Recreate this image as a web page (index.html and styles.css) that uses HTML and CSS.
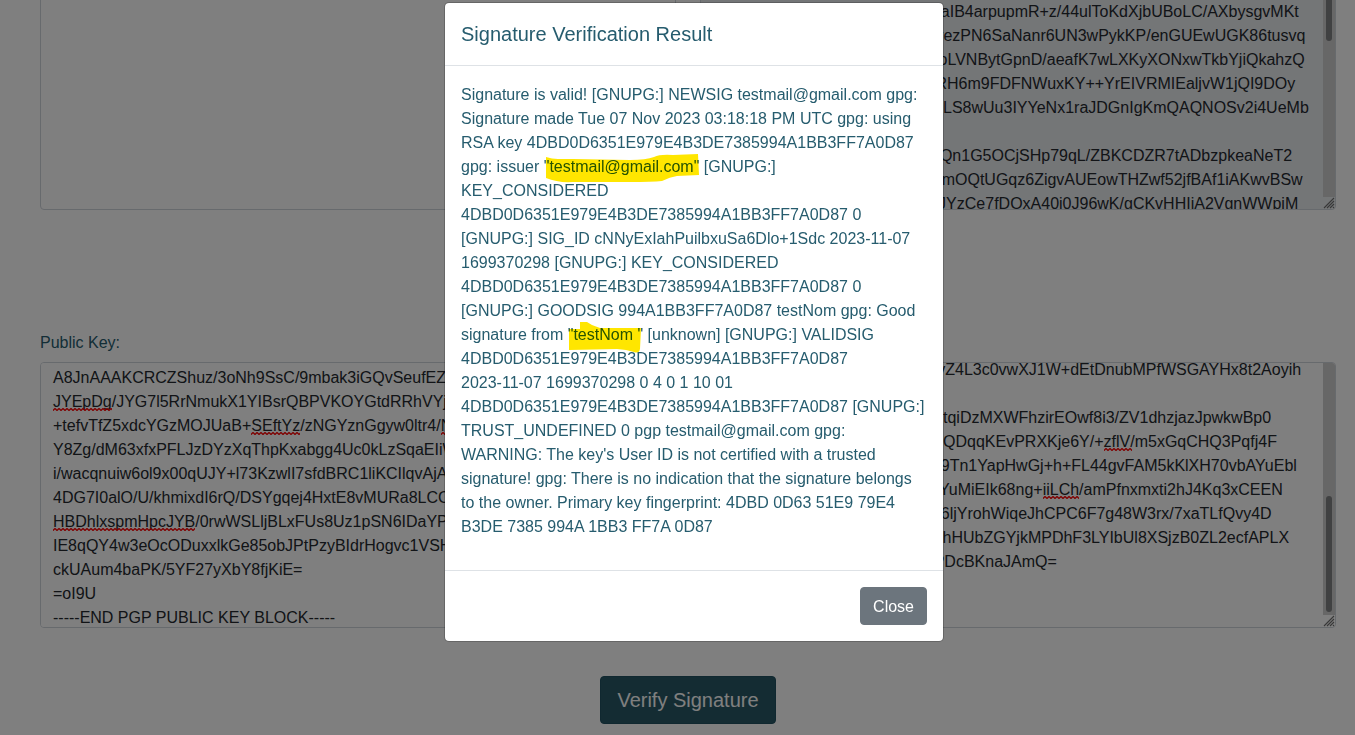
FILE: index.html
```html
<!DOCTYPE html>
<html lang="en">
<head>
<meta charset="utf-8">
<meta name="viewport" content="width=device-width, initial-scale=1">
<title>Verify Signature</title>
<link rel="stylesheet" href="styles.css">
</head>
<body>
<svg class="defs" aria-hidden="true">
  <defs>
    <pattern id="wave" width="4" height="3" patternUnits="userSpaceOnUse">
      <path d="M-1 1.5 L0 2.5 L2 .5 L4 2.5 L5 1.5" fill="none" stroke="#ff0000" stroke-width="1.3"/>
    </pattern>
    <symbol id="grip" viewBox="0 0 12 12">
      <path d="M1 11 11 1M4 11 11 4M7 11 11 7M10 11 11 10" fill="none" stroke="#707070" stroke-width="1.1"/>
    </symbol>
  </defs>
</svg>
<main class="page">
  <div class="fields fields-top">
    <div class="field"><textarea class="control" aria-label="Message" spellcheck="false"></textarea></div>
    <div class="field">
      <div class="editor">
        <textarea class="control" aria-label="Signed message" spellcheck="false" readonly>-----BEGIN PGP SIGNATURE-----

qb7gd2hn0ep5ua9o3d8ue6h2SiaIB4arpupmR+z/44ulToKdXjbUBoLC/AXbysgvMKt
qb7gd2hn0ep5ua9o3d8ub4nGsrezPN6SaNanr6UN3wPykKP/enGUEwUGK86tusvq
qb7gd2hn0ep5ua9o3d8ud4uw+oLVNBytGpnD/aeafK7wLXKyXONxwTkbYjiQkahzQ
qb7gd2hn0ep5ua9o3d8ue5h2aRH6m9FDFNWuxKY++YrEIVRMIEaljvW1jQI9DOy
qb7gd2hn0ep5ua9o3d8ug+ks3bLS8wUu3IYYeNx1raJDGnIgKmQAQNOSv2i4UeMb
=qb7g
qb7gd2hn0ep5ua9o3d8ue5h2atQn1G5OCjSHp79qL/ZBKCDZR7tADbzpkeaNeT2
qb7gd2hn0ep5ua9o3d8ud4upwimOQtUGqz6ZigvAUEowTHZwf52jfBAf1iAKwvBSw
qb7gd2hn0ep5ua9o3d8ub4nhwJYzCe7fDOxA40i0J96wK/gCKvHHIiA2VgnWWpiM


















</textarea>
        <div class="scrollbar" aria-hidden="true"><i class="thumb thumb-top"></i></div>
        <svg class="grip" aria-hidden="true"><use href="#grip"/></svg>
      </div>
    </div>
  </div>

  <div class="fields fields-keys">
    <div class="field">
      <label for="public-key">Public Key:</label>
      <div class="editor">
        <textarea class="control" id="public-key" spellcheck="false" data-scroll="268">-----BEGIN PGP PUBLIC KEY BLOCK-----










A8JnAAAKCRCZShuz/3oNh9SsC/9mbak3iGQvSeufEZb2
JYEpDg/JYG7l5RrNmukX1YIBsrQBPVKOYGtdRRhVYja7
+tefvTfZ5xdcYGzMOJUaB+SEftYz/zNGYznGgyw0ltr4/Nh
Y8Zg/dM63xfxPFLJzDYzXqThpKxabgg4Uc0kLzSqaEIiWq
i/wacqnuiw6ol9x00qUJY+l73KzwlI7sfdBRC1liKCIlqvAjAb
4DG7I0alO/U/khmixdI6rQ/DSYgqej4HxtE8vMURa8LCCd
HBDhlxspmHpcJYB/0rwWSLljBLxFUs8Uz1pSN6IDaYPe
IE8qQY4w3eOcODuxxlkGe85obJPtPzyBIdrHogvc1VSHa
ckUAum4baPK/5YF27yXbY8fjKiE=
=oI9U
-----END PGP PUBLIC KEY BLOCK-----</textarea>
        <svg class="typo typo-a" aria-hidden="true"><rect width="100%" height="3" fill="url(#wave)"/></svg>
        <svg class="typo typo-b" aria-hidden="true"><rect width="100%" height="3" fill="url(#wave)"/></svg>
        <svg class="typo typo-c" aria-hidden="true"><rect width="100%" height="3" fill="url(#wave)"/></svg>
        <svg class="typo typo-d" aria-hidden="true"><rect width="100%" height="3" fill="url(#wave)"/></svg>
      </div>
    </div>
    <div class="field">
      <div class="editor">
        <textarea class="control" aria-label="Signature" spellcheck="false" data-scroll="276">-----BEGIN PGP SIGNATURE-----










qb7gd2hn0ep5ua9o3d8ub4nhSvZ4L3c0vwXJ1W+dEtDnubMPfWSGAYHx8t2Aoyih
=d2hn
qb7gd2hn0ep5ua9o3d8ub4nks+tqiDzMXWFhzirEOwf8i3/ZV1dhzjazJpwkwBp0
qb7gd2hn0ep5ua9o3d8ue2hks+QDqqKEvPRXKje6Y/+zflV/m5xGqCHQ3Pqfj4F
qb7gd2hn0ep5ua9o3d8ue6h2Si9Tn1YapHwGj+h+FL44gvFAM5kKlXH70vbAYuEbl
qb7gd2hn0ep5ua9o3d8ud5u7ktYuMiEIk68ng+iiLCh/amPfnxmxti2hJ4Kq3xCEEN
qb7gd2hn0ep5ua9o3d8ug6b2Si6ljYrohWiqeJhCPC6F7g48W3rx/7xaTLfQvy4D
qb7gd2hn0ep5ua9o3d8ud5u7kshHUbZGYjkMPDhF3LYIbUl8XSjzB0ZL2ecfAPLX
qb7gd2hn0ep5ua9o3d8ue6h2liPDcBKnaJAmQ=
=n0ep

</textarea>
        <svg class="typo typo-e" aria-hidden="true"><rect width="100%" height="3" fill="url(#wave)"/></svg>
        <svg class="typo typo-f" aria-hidden="true"><rect width="100%" height="3" fill="url(#wave)"/></svg>
        <div class="scrollbar" aria-hidden="true"><i class="thumb thumb-end"></i></div>
        <svg class="grip" aria-hidden="true"><use href="#grip"/></svg>
      </div>
    </div>
  </div>

  <div class="actions"><button class="btn btn-verify" type="button">Verify Signature</button></div>
</main>

<div class="backdrop">
  <section class="modal" role="dialog" aria-modal="true" aria-labelledby="result-title">
    <header class="modal-header"><h5 id="result-title">Signature Verification Result</h5></header>
    <div class="modal-body">
      <p>Signature is valid! [GNUPG:] NEWSIG testmail@gmail.com gpg: Signature made Tue 07 Nov 2023 03:18:18 PM UTC gpg: using RSA key 4DBD0D6351E979E4B3DE7385994A1BB3FF7A0D87 gpg: issuer <span class="marked">"testmail@gmail.com"<svg class="marker" width="158" height="32" viewBox="0 0 158 32" aria-hidden="true"><path d="M2 5Q8 7 14 7L29 7 86 8Q102 8 110 5 116 2 129 3L154 2 155 23 133 24Q126 25 118 29 108 30 86 30L29 30Q14 31 2 26Z"/></svg></span> [GNUPG:] KEY_CONSIDERED 4DBD0D6351E979E4B3DE7385994A1BB3FF7A0D87 0 [GNUPG:] SIG_ID cNNyExIahPuilbxuSa6Dlo+1Sdc 2023-11-07 1699370298 [GNUPG:] KEY_CONSIDERED 4DBD0D6351E979E4B3DE7385994A1BB3FF7A0D87 0 [GNUPG:] GOODSIG 994A1BB3FF7A0D87 testNom gpg: Good signature from <span class="marked">"testNom "<svg class="marker" width="78" height="36" viewBox="0 0 78 36" aria-hidden="true"><path d="M1 9 12 9 12 2 19 2 24 5 32 8 73 8 72 29Q71 34 66 32L58 30 49 29 1 30Z"/></svg></span> [unknown] [GNUPG:] VALIDSIG 4DBD0D6351E979E4B3DE7385994A1BB3FF7A0D87 <span class="date">2023-11-07</span> 1699370298 0 4 0 1 10 01 4DBD0D6351E979E4B3DE7385994A1BB3FF7A0D87 [GNUPG:] TRUST_UNDEFINED 0 pgp testmail@gmail.com gpg: WARNING: The key's User ID is not certified with a trusted signature! gpg: There is no indication that the signature belongs to the owner. Primary key fingerprint: 4DBD 0D63 51E9 79E4 B3DE 7385 994A 1BB3 FF7A 0D87</p>
    </div>
    <footer class="modal-footer"><button class="btn btn-close" type="button">Close</button></footer>
  </section>
</div>
<script src="script.js"></script>
</body>
</html>
```
FILE: styles.css
```css
* { box-sizing: border-box; }

body {
  margin: 0;
  height: 100vh;
  overflow: hidden;
  background: #fff;
  color: #265c6e;
  font-family: "Liberation Sans", Arial, sans-serif;
  font-size: 16px;
  line-height: 24px;
}

.defs { position: absolute; width: 0; height: 0; }

.page { padding: 0 19px 0 40px; }

.fields {
  display: grid;
  grid-template-columns: 1fr 1fr;
  gap: 24px;
  align-items: end;
}
.fields-top { margin-top: -56px; }
.fields-keys { margin-top: 121px; }

.field label { display: block; margin-bottom: 7px; }
.editor { position: relative; }

.control {
  display: block;
  width: 100%;
  height: 266px;
  padding: 7px 12px 6px;
  border: 1px solid #ced4da;
  border-radius: 4px;
  background: #fff;
  color: #24292e;
  font: inherit;
  white-space: pre;
  overflow-x: hidden;
  overflow-y: auto;
  resize: none;
  scrollbar-width: none;
}
.control:read-only { background: #e9ecef; }

.scrollbar {
  position: absolute;
  top: 1px;
  right: 1px;
  bottom: 13px;
  width: 12px;
  display: flex;
  flex-direction: column;
  padding: 3px;
  border-top-right-radius: 3px;
  background: #cecece;
  pointer-events: none;
}
.thumb { border-radius: 3px; background: #808284; }
.thumb-top { height: 38%; }
.thumb-end { height: 47%; margin-top: auto; }

.grip {
  position: absolute;
  right: 1px;
  bottom: 1px;
  width: 12px;
  height: 12px;
  pointer-events: none;
}

/* spelling marks under words */
.typo { position: absolute; height: 3px; pointer-events: none; }
.typo-a { left: 13px; top: 46px; width: 59px; }
.typo-b { left: 211px; top: 70px; width: 49px; }
.typo-c { left: 401px; top: 70px; width: 20px; }
.typo-d { left: 13px; top: 166px; width: 142px; }
.typo-e { left: 404px; top: 86px; width: 28px; }
.typo-f { left: 343px; top: 134px; width: 36px; }

.btn {
  border: 1px solid transparent;
  border-radius: 4px;
  color: #fff;
  font: inherit;
}
.actions { display: flex; justify-content: center; margin-top: 48px; }
.btn-verify {
  padding: 8px 16px;
  border-color: #205060;
  background: #285866;
  font-size: 20px;
  line-height: 30px;
}
.btn-close {
  padding: 7px 12px 5px;
  border-color: #6c757d;
  background: #6c757d;
}

.backdrop {
  position: fixed;
  inset: 0;
  display: flex;
  justify-content: center;
  align-items: flex-start;
  padding: 2px 0 0 33px;
  background: rgba(0, 0, 0, .5);
}
.modal {
  width: 100%;
  max-width: 500px;
  border: 1px solid rgba(0, 0, 0, .2);
  border-radius: 5px;
  background: #fff;
  background-clip: padding-box;
}
.modal-header { padding: 16px; border-bottom: 1px solid #dee2e6; }
.modal-header h5 {
  margin: 0;
  font-size: 20px;
  font-weight: 400;
  line-height: 30px;
}
.modal-body { padding: 17px 16px 15px; }
.modal-body p { margin: 0 0 16px; }
.modal-footer {
  display: flex;
  justify-content: flex-end;
  padding: 16px;
  border-top: 1px solid #dee2e6;
}

.date { white-space: nowrap; }
.marked { position: relative; white-space: nowrap; }
.marker {
  position: absolute;
  left: 0;
  top: -6px;
  fill: #ffe600;
  mix-blend-mode: multiply;
  pointer-events: none;
}
```
FILE: script.js
```js
document.querySelectorAll('[data-scroll]').forEach(function (area) {
  area.scrollTop = Number(area.dataset.scroll);
});
```
